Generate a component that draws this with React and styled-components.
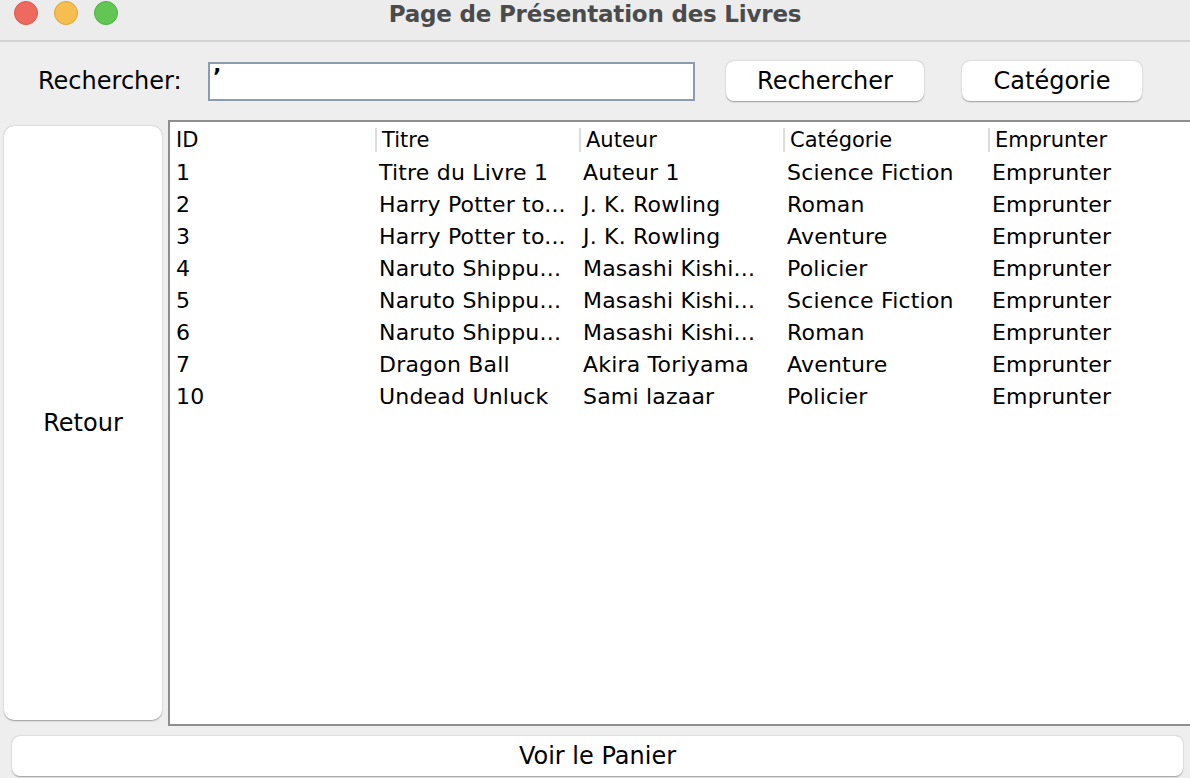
import React from "react";
import styled, { createGlobalStyle } from "styled-components";

const Global = createGlobalStyle`
  html, body { margin: 0; padding: 0; background: #eeeeee; }
  body { font-family: "DejaVu Sans", "Liberation Sans", sans-serif; color: #000; }
  * { box-sizing: border-box; }
`;

const Window = styled.div`
  width: 1190px;
  height: 778px;
  display: flex;
  flex-direction: column;
  background: #eeeeee;
  overflow: hidden;
`;

const TitleBar = styled.div`
  height: 42px;
  flex: none;
  display: grid;
  grid-template-columns: 1fr auto 1fr;
  align-items: center;
  background: #ececec;
  border-bottom: 2px solid #d4d4d4;
  padding-bottom: 14px;
`;

const Lights = styled.div`
  display: flex;
  gap: 16px;
  padding-left: 14px;
`;

const Light = styled.span`
  width: 24px;
  height: 24px;
  border-radius: 50%;
  background: ${(p) => p.$c};
  border: 1px solid ${(p) => p.$b};
`;

const Title = styled.div`
  font-family: "DejaVu Sans", sans-serif;
  font-weight: bold;
  font-size: 23px;
  color: #4b4b4b;
  letter-spacing: -0.2px;
  transform: translateY(1px);
`;

const Toolbar = styled.div`
  height: 78px;
  flex: none;
  display: flex;
  align-items: center;
  padding-left: 38px;
  padding-top: 0px;
`;

const Label = styled.span`
  font-size: 24px;
  width: 170px;
`;

const Input = styled.div`
  width: 487px;
  height: 39px;
  border: 2px solid #8c9bb0;
  background: #fff;
  font-size: 22px;
  font-weight: bold;
  padding: 0 0 0 3px;
  line-height: 26px;
`;

const Button = styled.div`
  background: #fff;
  border-radius: 8px;
  box-shadow: 0 0.5px 1.5px rgba(0, 0, 0, 0.35);
  display: flex;
  align-items: center;
  justify-content: center;
  font-size: 24px;
  width: ${(p) => p.$w || "auto"};
  height: ${(p) => p.$h || "auto"};
  margin-left: ${(p) => p.$ml || "0"};
`;

const Main = styled.div`
  flex: 1;
  display: flex;
  align-items: stretch;
  min-height: 0;
`;

const SideCol = styled.div`
  width: 168px;
  flex: none;
  padding: 6px 6px 6px 4px;
  display: flex;
`;

const SideButton = styled(Button)`
  flex: 1;
  border-radius: 10px;
`;

const Table = styled.div`
  flex: 1;
  background: #fff;
  border: 2px solid #8e8e8e;
  border-right: none;
  padding-left: 1px;
`;

const Row = styled.div`
  display: grid;
  grid-template-columns: 204px 204px 204px 205px 204px;
  height: ${(p) => (p.$head ? "34px" : "32px")};
  align-items: center;
`;

const HeadCell = styled.div`
  font-size: 21px;
  height: 24px;
  line-height: 24px;
  padding-left: ${(p) => (p.$first ? "5px" : "5px")};
  border-left: ${(p) => (p.$first ? "none" : "2px solid #dcdcdc")};
  margin-top: 2px;
  white-space: nowrap;
  overflow: hidden;
`;

const Cell = styled.div`
  font-size: 22px;
  letter-spacing: 0.2px;
  padding-left: ${(p) => (p.$first ? "5px" : "4px")};
  white-space: nowrap;
  overflow: hidden;
`;

const Footer = styled.div`
  height: 52px;
  flex: none;
  padding: 10px 7px 2px 12px;
  display: flex;
`;

const FooterButton = styled(Button)`
  flex: 1;
`;

const rows = [
  ["1", "Titre du Livre 1", "Auteur 1", "Science Fiction"],
  ["2", "Harry Potter to...", "J. K. Rowling", "Roman"],
  ["3", "Harry Potter to...", "J. K. Rowling", "Aventure"],
  ["4", "Naruto Shippu...", "Masashi Kishi...", "Policier"],
  ["5", "Naruto Shippu...", "Masashi Kishi...", "Science Fiction"],
  ["6", "Naruto Shippu...", "Masashi Kishi...", "Roman"],
  ["7", "Dragon Ball", "Akira Toriyama", "Aventure"],
  ["10", "Undead Unluck", "Sami lazaar", "Policier"],
];

export default function App() {
  return (
    <>
      <Global />
      <Window>
        <TitleBar>
          <Lights>
            <Light $c="#ee6a5f" $b="#d9574c" />
            <Light $c="#f5be4f" $b="#dca43a" />
            <Light $c="#62c655" $b="#4fae44" />
          </Lights>
          <Title>Page de Présentation des Livres</Title>
          <div />
        </TitleBar>
        <Toolbar>
          <Label>Rechercher:</Label>
          <Input>’</Input>
          <Button $w="198px" $h="40px" $ml="31px">Rechercher</Button>
          <Button $w="180px" $h="40px" $ml="38px">Catégorie</Button>
        </Toolbar>
        <Main>
          <SideCol>
            <SideButton>Retour</SideButton>
          </SideCol>
          <Table>
            <Row $head>
              {["ID", "Titre", "Auteur", "Catégorie", "Emprunter"].map((h, i) => (
                <HeadCell key={h} $first={i === 0}>{h}</HeadCell>
              ))}
            </Row>
            {rows.map((r) => (
              <Row key={r[0]}>
                {[...r, "Emprunter"].map((c, i) => (
                  <Cell key={i} $first={i === 0}>{c}</Cell>
                ))}
              </Row>
            ))}
          </Table>
        </Main>
        <Footer>
          <FooterButton>Voir le Panier</FooterButton>
        </Footer>
      </Window>
    </>
  );
}
